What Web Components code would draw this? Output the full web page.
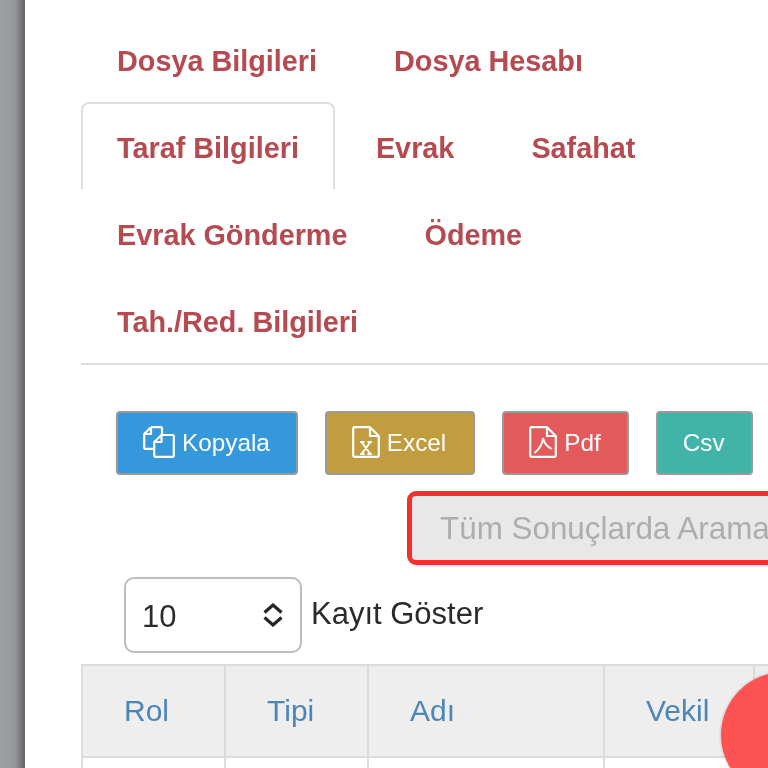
<!DOCTYPE html>
<html lang="tr">
<head>
<meta charset="utf-8">
<title>Taraf Bilgileri</title>
<style>
  html, body { margin: 0; height: 100%; overflow: hidden; background: #fff; }
  body { font-family: "Liberation Sans", Arial, sans-serif; }
</style>
</head>
<body>
<x-page>
  <x-tabs>
    <x-tab>Dosya Bilgileri</x-tab>
    <x-tab>Dosya Hesabı</x-tab>
    <x-tab active>Taraf Bilgileri</x-tab>
    <x-tab>Evrak</x-tab>
    <x-tab>Safahat</x-tab>
    <x-tab>Evrak Gönderme</x-tab>
    <x-tab>Ödeme</x-tab>
    <x-tab>Tah./Red. Bilgileri</x-tab>
  </x-tabs>
  <x-toolbar>
    <x-button color="#3498db" icon="copy" pad="26">Kopyala</x-button>
    <x-button color="#c29d3f" icon="excel" pad="27">Excel</x-button>
    <x-button color="#e25a5a" icon="pdf" pad="26">Pdf</x-button>
    <x-button color="#41b3a9" pad="26">Csv</x-button>
  </x-toolbar>
  <x-search>Tüm Sonuçlarda Arama</x-search>
  <x-length value="10">Kayıt Göster</x-length>
  <x-table columns="Rol,Tipi,Adı,Vekil,"></x-table>
</x-page>
<x-fab></x-fab>

<script>
'use strict';

const ICONS = {
  copy: `
    <svg width="32" height="32" viewBox="0 0 32 32" fill="none" stroke="currentColor" stroke-width="2.2" stroke-linejoin="round">
      <path d="M8 1.200h10a1 1 0 0 1 1 1V8.500"/>
      <path d="M8 1.200 1.200 8v13.800a1 1 0 0 0 1 1H11"/>
      <path d="M8 1.200V8H1.200"/>
      <path d="M18.500 9h11.300a1 1 0 0 1 1 1v19.800a1 1 0 0 1-1 1H12.200a1 1 0 0 1-1-1V16z"/>
      <path d="M18.500 9v7h-7.300"/>
    </svg>`,
  excel: `
    <svg width="28" height="32" viewBox="0 0 28 32" fill="none" stroke="currentColor" stroke-width="2.2" stroke-linejoin="round">
      <path d="M18 1.200H2.500a1.300 1.300 0 0 0-1.300 1.300v27a1.300 1.300 0 0 0 1.300 1.300h23a1.300 1.300 0 0 0 1.300-1.300V10z"/>
      <path d="M18 1.200V10h8.800"/>
      <path d="M9.500 16 18.500 28M18.500 16 9.500 28M8 16h4.500M15.500 16h4.500M8 28h4.500M15.500 28h4.500" stroke-width="2"/>
    </svg>`,
  pdf: `
    <svg width="28" height="32" viewBox="0 0 28 32" fill="none" stroke="currentColor" stroke-width="2.2" stroke-linejoin="round">
      <path d="M18 1.200H2.500a1.300 1.300 0 0 0-1.300 1.300v27a1.300 1.300 0 0 0 1.300 1.300h23a1.300 1.300 0 0 0 1.300-1.300V10z"/>
      <path d="M18 1.200V10h8.800"/>
      <path d="M14 12c0 4-3 11-8.500 15M14 12c1 5 4.500 9 9 11" stroke-width="1.900"/>
    </svg>`
};

class XPage extends HTMLElement {
  constructor() {
    super();
    this.attachShadow({ mode: 'open' });
    this.shadowRoot.innerHTML = `
      <style>
        :host { display: flex; width: 768px; height: 768px; overflow: hidden; filter: blur(.4px); }
        .side {
          flex: 0 0 25px;
          background: linear-gradient(to right, #9fa1a5 0, #95979b 15px, #77787c 21px, #616265 25px);
        }
        main { flex: 1 0 0; min-width: 0; padding: 15px 0 0 56px; }
      </style>
      <div class="side"></div>
      <main><slot></slot></main>
    `;
  }
}

class XTabs extends HTMLElement {
  constructor() {
    super();
    this.attachShadow({ mode: 'open' });
    this.shadowRoot.innerHTML = `
      <style>
        :host { display: flex; flex-wrap: wrap; column-gap: 5px; border-bottom: 2px solid #dfdfdf; }
      </style>
      <slot></slot>
    `;
  }
}

class XTab extends HTMLElement {
  constructor() {
    super();
    this.attachShadow({ mode: 'open' });
    this.shadowRoot.innerHTML = `
      <style>
        :host {
          display: block;
          box-sizing: border-box;
          height: 87px;
          padding: 28px 34px 0;
          border: 2px solid transparent;
          border-bottom: 0;
          border-radius: 8px 8px 0 0;
          font-size: 28.800px;
          line-height: 33px;
          font-weight: bold;
          color: #b54a50;
          white-space: nowrap;
        }
        :host([active]) { border-color: #dfdfdf; }
      </style>
      <slot></slot>
    `;
  }
}

class XToolbar extends HTMLElement {
  constructor() {
    super();
    this.attachShadow({ mode: 'open' });
    this.shadowRoot.innerHTML = `
      <style>
        :host { display: flex; gap: 27px; margin: 46px 0 0 35px; }
      </style>
      <slot></slot>
    `;
  }
}

class XButton extends HTMLElement {
  constructor() {
    super();
    const icon = ICONS[this.getAttribute('icon')] || '';
    this.attachShadow({ mode: 'open' });
    this.shadowRoot.innerHTML = `
      <style>
        :host {
          display: flex;
          align-items: center;
          gap: 7px;
          box-sizing: border-box;
          height: 64px;
          padding: 0 ${this.getAttribute('pad')}px 0 25px;
          border: 2px solid #9c9a98;
          border-radius: 4px;
          background: ${this.getAttribute('color')};
          color: #fff;
          font-size: 24.300px;
          white-space: nowrap;
        }
        svg { display: block; margin-top: -2px; }
      </style>
      ${icon}
      <slot></slot>
    `;
  }
}

class XSearch extends HTMLElement {
  constructor() {
    super();
    this.attachShadow({ mode: 'open' });
    this.shadowRoot.innerHTML = `
      <style>
        :host {
          display: flex;
          align-items: center;
          box-sizing: border-box;
          width: 440px;
          height: 74px;
          margin: 16px 0 0 326px;
          padding: 2px 0 0 28px;
          border: 5px solid #f4302f;
          border-radius: 9px;
          background: #e8e8e9;
          color: #adadad;
          font-size: 31.400px;
          white-space: nowrap;
        }
      </style>
      <slot></slot>
    `;
  }
}

class XLength extends HTMLElement {
  constructor() {
    super();
    this.attachShadow({ mode: 'open' });
    this.shadowRoot.innerHTML = `
      <style>
        :host {
          display: flex;
          align-items: center;
          gap: 9px;
          margin: 12px 0 0 43px;
          color: #2b2b2b;
          font-size: 31px;
        }
        .select {
          display: flex;
          align-items: center;
          justify-content: space-between;
          box-sizing: border-box;
          width: 178px;
          height: 76px;
          padding: 4px 17px 0 16px;
          border: 2px solid #bdbdbd;
          border-radius: 10px;
        }
        .label { margin-top: -2px; }
        svg { display: block; margin-top: -4px; }
      </style>
      <div class="select">
        <span>${this.getAttribute('value')}</span>
        <svg width="20" height="24" viewBox="0 0 20 24" fill="none" stroke="#262626" stroke-width="3.200">
          <path d="M1.500 9.500 10 2l8.500 7.500M1.500 14.500 10 22l8.500-7.500"/>
        </svg>
      </div>
      <span class="label"><slot></slot></span>
    `;
  }
}

class XTable extends HTMLElement {
  constructor() {
    super();
    const widths = [143, 143, 236, 150, 100];
    const columns = this.getAttribute('columns').split(',');
    const heads = columns.map((c, i) => `<th style="width:${widths[i]}px">${c}</th>`).join('');
    const cells = columns.map(() => '<td></td>').join('');
    this.attachShadow({ mode: 'open' });
    this.shadowRoot.innerHTML = `
      <style>
        :host { display: block; width: 772px; margin-top: 11px; }
        table { table-layout: fixed; border-collapse: collapse; width: 772px; }
        th, td { border: 2px solid #dcdcdc; box-sizing: border-box; }
        th {
          height: 92px;
          padding: 0 0 0 41px;
          background: #eeeeef;
          color: #4c86b8;
          font-size: 30px;
          font-weight: normal;
          text-align: left;
        }
        td { height: 60px; }
      </style>
      <table>
        <thead><tr>${heads}</tr></thead>
        <tbody><tr>${cells}</tr></tbody>
      </table>
    `;
  }
}

class XFab extends HTMLElement {
  constructor() {
    super();
    this.attachShadow({ mode: 'open' });
    this.shadowRoot.innerHTML = `
      <style>
        :host {
          position: fixed;
          left: 721px;
          top: 672px;
          width: 126px;
          height: 126px;
          border-radius: 50%;
          background: #fd5353;
          box-shadow: 0 0 3px rgba(0, 0, 0, .25);
        }
      </style>
    `;
  }
}

customElements.define('x-page', XPage);
customElements.define('x-tabs', XTabs);
customElements.define('x-tab', XTab);
customElements.define('x-toolbar', XToolbar);
customElements.define('x-button', XButton);
customElements.define('x-search', XSearch);
customElements.define('x-length', XLength);
customElements.define('x-table', XTable);
customElements.define('x-fab', XFab);
</script>
</body>
</html>
